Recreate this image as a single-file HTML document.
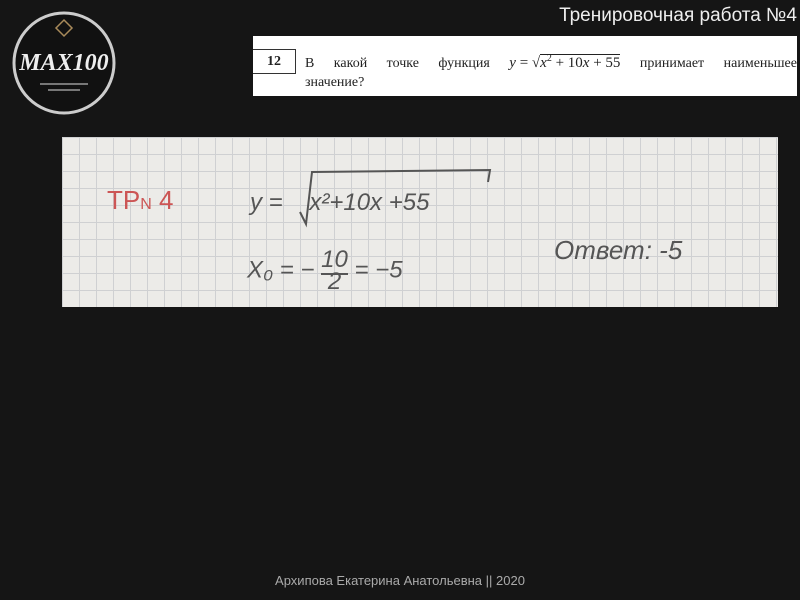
<!DOCTYPE html>
<html><head><meta charset="utf-8"><style>
body{margin:0;width:800px;height:600px;background:#151515;position:relative;overflow:hidden;font-family:"Liberation Sans",sans-serif}
.t{position:absolute;right:3px;top:5px;color:#eee;font-size:19px}
.box{position:absolute;left:253px;top:36px;width:544px;height:60px;background:#fff;font-family:"Liberation Serif",serif;font-size:14px;color:#222}
.n{position:absolute;left:0;top:13px;width:42px;height:23px;border:1px solid #333;border-left:none;text-align:center;line-height:23px;font-weight:bold}
.l1{position:absolute;left:52px;top:17px;right:0;text-align:justify;text-align-last:justify}
.m{display:inline-block;white-space:nowrap;font-size:15px}
.l2{position:absolute;left:52px;top:39px}
.paper{position:absolute;left:62px;top:137px;width:716px;height:170px;background:#ecebe8;
background-image:linear-gradient(#cfd0d2 1px,transparent 1px),linear-gradient(90deg,#cfd0d2 1px,transparent 1px);background-size:17px 17px}
.h{position:absolute;font-family:"Liberation Sans",sans-serif;color:#555;font-size:24px;font-style:italic;white-space:nowrap}
.f{position:absolute;left:0;right:0;bottom:12px;text-align:center;color:#aaa;font-size:13px}
</style></head><body>
<svg style="position:absolute;left:10px;top:8px" width="110" height="110">
<circle cx="54" cy="55" r="50" fill="#111" stroke="#ccc" stroke-width="3"/>
<path d="M54 12 l8 8 -8 8 -8 -8z" fill="none" stroke="#a88a5a" stroke-width="1.5"/>
<text x="54" y="62" text-anchor="middle" fill="#eee" font-family="Liberation Serif" font-style="italic" font-weight="bold" font-size="24">MAX100</text>
<rect x="30" y="75" width="48" height="2" fill="#777"/><rect x="38" y="81" width="32" height="2" fill="#777"/>
</svg>
<div class="t">Тренировочная работа №4</div>
<div class="box"><div class="n">12</div>
<div class="l1">В какой точке функция <span class="m"><i>y</i> = √<span style="border-top:1px solid #222"><i>x</i><sup style="font-size:10px">2</sup> + 10<i>x</i> + 55</span></span> принимает наименьшее</div>
<div class="l2">значение?</div></div>
<div class="paper">
<div class="h" style="left:45px;top:48px;color:#c55;font-style:normal;font-size:26px">TP<span style="font-size:16px">N</span> 4</div>
<div class="h" style="left:188px;top:52px;">y = &nbsp;&nbsp;&nbsp;x²+10x +55</div>
<svg style="position:absolute;left:230px;top:25px" width="210" height="70"><path d="M8 50 L14 62 L20 10 L198 8 L196 20" fill="none" stroke="#555" stroke-width="2"/></svg>
<div class="h" style="left:185px;top:112px;">X₀ = − <span style="display:inline-block;text-align:center;vertical-align:middle;line-height:22px"><span style="border-bottom:2px solid #555">10</span><br>2</span> = −5</div>
<div class="h" style="left:492px;top:98px;font-size:26px">Ответ: -5</div>
</div>
<div class="f">Архипова Екатерина Анатольевна || 2020</div>
</body></html>
